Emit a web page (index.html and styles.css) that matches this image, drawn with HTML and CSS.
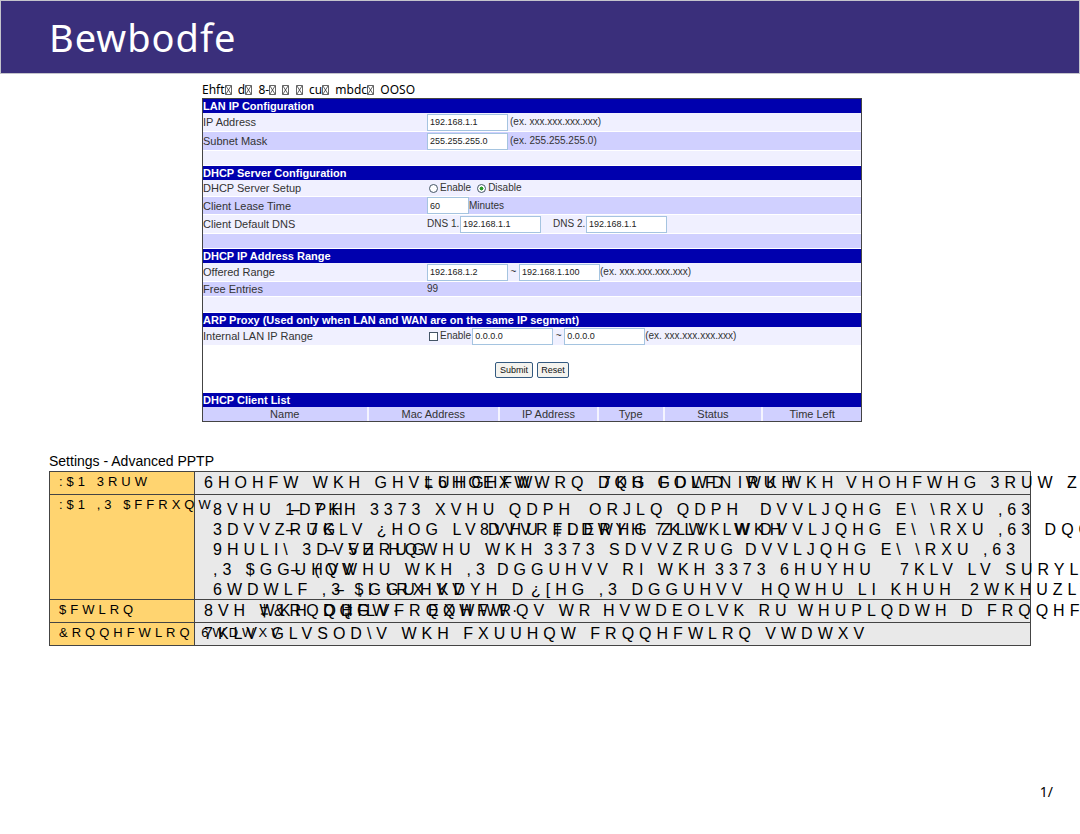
FILE: index.html
```
<!DOCTYPE html>
<html lang="en">
<head>
<meta charset="utf-8">
<title>Bewbodfe</title>
<link rel="stylesheet" href="styles.css">
</head>
<body>
<svg class="defs" aria-hidden="true"><symbol id="box" viewBox="0 0 7 10"><path d="M.5 .5h6v9h-6zM1 1l5 8M6 1l-5 8" fill="none" stroke="#222" stroke-width=".7"/></symbol></svg>
<header class="banner"><h1>Bewbodfe</h1></header>
<main>
  <section class="figure">
    <p class="caption">Ehft<svg class="box"><use href="#box"/></svg>&nbsp; d<svg class="box"><use href="#box"/></svg>&nbsp; 8-<svg class="box"><use href="#box"/></svg>&nbsp; <svg class="box"><use href="#box"/></svg>&nbsp; <svg class="box"><use href="#box"/></svg>&nbsp; cu<svg class="box"><use href="#box"/></svg>&nbsp; mbdc<svg class="box"><use href="#box"/></svg>&nbsp; OOSO</p>
    <form class="panel">
      <h2>LAN IP Configuration</h2>
      <div class="row tall"><label for="ip">IP Address</label><div class="field"><input class="text" id="ip" value="192.168.1.1"><span class="hint">(ex. xxx.xxx.xxx.xxx)</span></div></div>
      <div class="row tall dark"><label for="mask">Subnet Mask</label><div class="field"><input class="text" id="mask" value="255.255.255.0"><span class="hint">(ex. 255.255.255.0)</span></div></div>
      <div class="row gap"></div>
      <h2>DHCP Server Configuration</h2>
      <div class="row"><span>DHCP Server Setup</span><div class="field options"><label><input type="radio" name="dhcp">Enable</label><label><input type="radio" name="dhcp" checked>Disable</label></div></div>
      <div class="row mid dark"><label for="lease">Client Lease Time</label><div class="field"><input class="text short" id="lease" value="60"><span>Minutes</span></div></div>
      <div class="row tall"><span>Client Default DNS</span><div class="field"><label class="dns" for="dns1">DNS 1.</label><input class="text" id="dns1" value="192.168.1.1"><label class="dns second" for="dns2">DNS 2.</label><input class="text" id="dns2" value="192.168.1.1"></div></div>
      <div class="row gap dark"></div>
      <h2>DHCP IP Address Range</h2>
      <div class="row tall"><label for="from">Offered Range</label><div class="field"><input class="text" id="from" value="192.168.1.2"><span class="tilde">~</span><input class="text" aria-label="Offered range end" value="192.168.1.100"><span>(ex. xxx.xxx.xxx.xxx)</span></div></div>
      <div class="row gap dark"><span>Free Entries</span><div class="field">99</div></div>
      <div class="row gap last"></div>
      <h2>ARP Proxy (Used only when LAN and WAN are on the same IP segment)</h2>
      <div class="row tall"><span>Internal LAN IP Range</span><div class="field options"><label><input type="checkbox">Enable</label><input class="text" aria-label="Internal range start" value="0.0.0.0"><span class="tilde">~</span><input class="text" aria-label="Internal range end" value="0.0.0.0"><span>(ex. xxx.xxx.xxx.xxx)</span></div></div>
      <div class="actions"><button type="button">Submit</button><button type="button" class="reset">Reset</button></div>
      <h2>DHCP Client List</h2>
      <table class="clients"><tr><th class="c1">Name</th><th class="c2">Mac Address</th><th class="c3">IP Address</th><th class="c4">Type</th><th class="c5">Status</th><th class="c6">Time Left</th></tr></table>
    </form>
  </section>
  <section class="settings">
    <h3>Settings - Advanced PPTP</h3>
    <table class="spec">
      <tr><th>:$1 3RUW</th><td><div class="line">6HOHFW WKH GHVLUHG<span class="over x220">‡6HOHFW·</span><span class="over x279">EXWWRQ DQG FOLFN WKH</span><span class="over x398">7KH GDWD IRU</span><span class="over x582">WKH</span><span class="over x642">VHOHFWHG 3RUW ZLOO</span></div></td></tr>
      <tr><th>:$1 ,3 $FFRXQW</th><td class="list">
        <div class="line">8VHU 1DPH<span class="over x78">– 7KH 3373 XVHU QDPH</span><span class="over x376">ORJLQ QDPH</span><span class="over x547">DVVLJQHG E\ \RXU ,63</span></div>
        <div class="line">3DVVZRUG<span class="over x73">– 7KLV ¿HOG LV</span><span class="over x267">8VHU</span><span class="over x275">DVVRFLDWHG ZLWK WKH</span><span class="over x340">‡DERYH</span><span class="over x442">7KLV LW</span><span class="over x547">DVVLJQHG E\ \RXU ,63 DQG</span></div>
        <div class="line">9HULI\ 3DVVZRUG<span class="over x112">– 5H HQWHU WKH</span><span class="over x331">3373 SDVVZRUG</span><span class="over x532">DVVLJQHG E\ \RXU ,63</span></div>
        <div class="line">,3 $GGUHVV<span class="over x78">– (QWHU WKH ,3</span><span class="over x284">DGGUHVV RI WKH</span><span class="over x502">3373 6HUYHU</span><span class="over x687">7KLV LV SURYLGHG</span></div>
        <div class="line">6WDWLF ,3 $GGUHVV<span class="over x122">– ,I \RX KDYH D</span><span class="over x318">¿[HG ,3 DGGUHVV</span><span class="over x548">HQWHU LI KHUH</span><span class="over x757">2WKHUZLVH</span></div>
      </td></tr>
      <tr><th>$FWLRQ</th><td><div class="line">8VH WKH<span class="over x56">‡&amp;RQQHFW·</span><span class="over x119">DQG</span><span class="over x140">‡'LVFRQQHFW·</span><span class="over x224">EXWWRQV WR</span><span class="over x399">HVWDEOLVK RU</span><span class="over x594">WHUPLQDWH D FRQQHFWLRQ</span></div></td></tr>
      <tr><th>&amp;RQQHFWLRQ 6WDWXV</th><td><div class="line">7KLV GLVSOD\V WKH FXUUHQW FRQQHFWLRQ VWDWXV</div></td></tr>
    </table>
  </section>
</main>
<footer>1/</footer>
</body>
</html>
```
FILE: styles.css
```
* { box-sizing: border-box; }
body {
  margin: 0;
  min-height: 100vh;
  display: flex;
  flex-direction: column;
  overflow: hidden;
  background: #fff;
  color: #000;
  font-family: "Liberation Sans", Arial, sans-serif;
}
h1, h2, h3, p { margin: 0; font-weight: normal; }
.defs { display: none; }

.banner {
  border: 1px solid #c4c4cc;
  height: 74px;
  padding: 0 48px;
  display: flex;
  align-items: center;
  background: #3a2f7b;
}
.banner h1 { font: 38px "Noto Sans", "Open Sans", sans-serif; letter-spacing: 1px; color: #fff; }

main { overflow: hidden; }
.figure { max-width: 862px; padding-left: 202px; padding-top: 8px; }
.caption { font: 12px/16px "Noto Sans", "Open Sans", sans-serif; white-space: nowrap; }
.box { width: 7px; height: 10px; vertical-align: -1px; }

.panel { border: 1px solid #444; font-size: 11px; line-height: 14px; color: #333; }
.panel h2 { background: #0000ae; color: #fff; font-size: 11px; font-weight: bold; line-height: 14px; height: 14px; white-space: nowrap; }
.row {
  display: grid;
  grid-template-columns: 223px 1fr;
  align-items: center;
  height: 17px;
  background: #f0f0ff;
  border-bottom: 1px solid #fff;
  white-space: nowrap;
}
.row.tall { height: 19px; }
.row.mid { height: 18px; }
.row.gap { height: 15px; }
.row.last { height: 16px; }
.row.dark { background: #d0d0ff; }
.field { display: flex; align-items: center; padding-left: 1px; font-size: 10px; }
.text {
  width: 81px;
  height: 17px;
  padding: 0 2px;
  border: 1px solid #a5c4e0;
  background: #fff;
  font: 9px "Liberation Sans", Arial, sans-serif;
  color: #222;
}
.text.short { width: 42px; }
.hint { margin-left: 2px; }
.dns { width: 33px; }
.dns.second { margin-left: 12px; }
.tilde { width: 11px; text-align: center; }
.options label { display: flex; align-items: center; margin-right: 4px; }
.options input[type="radio"], .options input[type="checkbox"] {
  appearance: none;
  width: 9px;
  height: 9px;
  margin: 0 2px;
  border: 1px solid #456;
  background: #fff;
}
.options input[type="radio"] { border-radius: 50%; }
.options input[type="radio"]:checked { background: radial-gradient(#2a9a2a 35%, #fff 45%); }
.options label + .text { margin-left: -3px; }

.actions { display: flex; justify-content: center; align-items: center; gap: 4px; height: 47px; }
.actions button {
  width: 38px;
  height: 16px;
  padding: 0;
  border: 1px solid #345a80;
  border-radius: 2px;
  background: #f4f3ee;
  font: 9px "Liberation Sans", Arial, sans-serif;
  color: #111;
}
.actions .reset { width: 32px; }

.clients { width: 100%; border-collapse: collapse; table-layout: fixed; }
.clients th { padding: 1px 0 0; height: 14px; background: #d0d0ff; font-weight: normal; line-height: 13px; border-left: 2px solid #f4f4ff; }
.clients th:first-child { border-left: 0; }
.c1 { width: 25%; }
.c2 { width: 20%; }
.c3 { width: 15%; }
.c4 { width: 10%; }
.c5 { width: 15%; }

.settings { margin: 29px 49px 0; }
.settings h3 { font-size: 14px; line-height: 20px; }
.spec { width: 100%; border-collapse: collapse; table-layout: fixed; }
.spec th, .spec td { border: 1px solid #444; padding: 0 9px; text-align: left; vertical-align: top; white-space: nowrap; }
.spec th { width: 145px; background: #ffd470; font-size: 13px; font-weight: normal; line-height: 20px; letter-spacing: 4px; }
.spec td { background: #e9e9e9; font-size: 16px; line-height: 22px; letter-spacing: 5px; }
.spec .list { padding: 5px 18px 0; line-height: 20px; }
.spec .list .line:last-child { height: 19px; }
.line { position: relative; white-space: pre; }

/* Runs printed over the first run of a line */
.over { position: absolute; top: 0; }
.x56 { left: 56px; }
.x73 { left: 73px; }
.x78 { left: 78px; }
.x112 { left: 112px; }
.x119 { left: 119px; }
.x122 { left: 122px; }
.x140 { left: 140px; }
.x220 { left: 220px; }
.x224 { left: 224px; }
.x267 { left: 267px; }
.x275 { left: 275px; }
.x279 { left: 279px; }
.x284 { left: 284px; }
.x318 { left: 318px; }
.x331 { left: 331px; }
.x340 { left: 340px; }
.x376 { left: 376px; }
.x398 { left: 398px; }
.x399 { left: 399px; }
.x442 { left: 442px; }
.x502 { left: 502px; }
.x532 { left: 532px; }
.x547 { left: 547px; }
.x548 { left: 548px; }
.x582 { left: 582px; }
.x594 { left: 594px; }
.x642 { left: 642px; }
.x687 { left: 687px; }
.x757 { left: 757px; }

footer { margin-top: auto; padding: 0 27px 32px 0; text-align: right; font: 14px/20px "Noto Sans", "Open Sans", sans-serif; }
```
